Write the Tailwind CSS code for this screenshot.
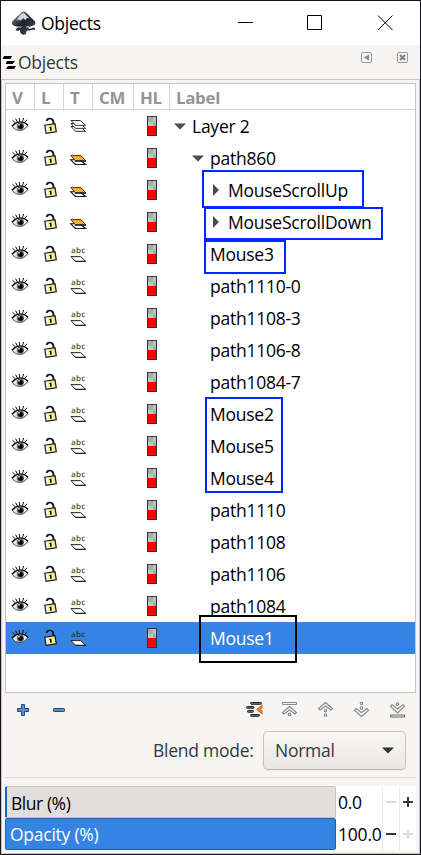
<!DOCTYPE html>
<html lang="en">
<head>
<meta charset="utf-8">
<title>Objects</title>
<script src="https://cdn.jsdelivr.net/npm/@tailwindcss/browser@4"></script>
</head>
<body class="bg-[#17151d]">
<svg class="absolute size-0">
  <defs>
    <linearGradient id="gold" x1="0" x2="1"><stop offset="0" stop-color="#ffc31a"/><stop offset="1" stop-color="#f3a52b"/></linearGradient>
    <linearGradient id="body" x1="0" x2="1"><stop offset="0" stop-color="#fffef0"/><stop offset="1" stop-color="#f8df62"/></linearGradient>
    <linearGradient id="ink" x1="0" x2="1" y2="1"><stop offset="0" stop-color="#8f98a8"/><stop offset=".45" stop-color="#20222a"/><stop offset="1" stop-color="#454d5d"/></linearGradient>
    <symbol id="eye" viewBox="0 0 29 32">
      <path d="M6.3 16.6Q10 11.5 15 11.8Q20 12 21.8 16Q18 20.8 13.5 20.6Q9 20.3 6.3 16.6Z" fill="#e8e8e8" stroke="#333" stroke-width=".9"/>
      <path d="M6 16Q10 11.8 14.5 12Q19 12 22 15.2" fill="none" stroke="#000" stroke-width="1.2"/>
      <circle cx="14.4" cy="16.2" r="3.6" fill="#666"/><circle cx="14.6" cy="16.4" r="2.4" fill="#000"/><circle cx="13" cy="14.8" r=".9" fill="#ddd"/>
      <path d="M6.5 10.2L9.5 13M9.6 8.6L11.3 12M13.2 8L13.6 11.6M17.6 8L16.5 11.7M21 9.7L18.6 12.6" stroke="#111" stroke-width="1"/>
    </symbol>
    <symbol id="lock" viewBox="0 0 29 32">
      <path d="M11.6 11Q11.8 9 14.3 8.7Q17.9 8.5 18.3 11.6L18.6 14.2" fill="none" stroke="#111" stroke-width="1.8"/>
      <path d="M12.8 10.5Q14.5 9 16.7 9.9" fill="none" stroke="#bbb" stroke-width=".5"/>
      <path d="M9.8 15.2L20 13.6L21.3 21.8L11.1 23.4Z" fill="url(#body)" stroke="#111" stroke-width="1.15"/>
      <path d="M14 17L16.4 16.6L16.3 18L16.9 20.4L15 20.7L15 18.500Z" fill="#000"/>
    </symbol>
    <symbol id="layer" viewBox="0 0 29 32">
      <g fill="#fff" stroke="#222" stroke-width="1"><path d="M7 16.5H16.5L21.5 21.3H11.7Z"/><path d="M7 13.6H16.5L21.5 18.4H11.7Z"/><path d="M7 10.6H16.5L21.5 15.4H11.7Z"/></g>
      <path d="M11.5 15.5H21.5M11.5 18.5H21.5M11.5 21.5H21.5" stroke="#555"/>
    </symbol>
    <symbol id="group" viewBox="0 0 29 32">
      <path d="M6.7 17.8H16L21.6 22.5H11.4Z" fill="#fff" stroke="#111" stroke-width="1.1"/>
      <path d="M6.8 13.6H17L21.6 18.7H11.4Z" fill="url(#gold)" stroke="#29220f" stroke-width=".9"/>
      <path d="M11 19.2H22" stroke="#111" stroke-width="1.1"/>
    </symbol>
    <symbol id="shape" viewBox="0 0 29 32">
      <text x="7" y="15" font-family="DejaVu Sans" font-size="7.8" textLength="14.2" fill="#222">abc</text>
      <path d="M7 18.6H16.8L21.5 23.3H11.5Z" fill="#fff" stroke="#222" stroke-width="1"/><path d="M11 23.4H22" stroke="#222"/>
    </symbol>
    <symbol id="hl" viewBox="0 0 36 32">
      <rect x="13" y="6" width="10" height="20" fill="#333"/><path d="M14 7h8v9h-8z" fill="#aaa"/><path d="M19 7h3v5h-3zM14 12h5v4h-5z" fill="#c3c3c3"/><path d="M14 16h8v9h-8z" fill="#f00"/>
    </symbol>
  </defs>
</svg>
<div class="relative w-[421px] h-[855px] overflow-hidden bg-[#17151d] pl-px pt-px pr-px font-['Open_Sans',sans-serif] text-[17.5px] tracking-[-0.25px] text-black">
  <header class="h-[44px] bg-white flex items-center">
    <svg class="ml-[10px] mt-[-1px]" width="26" height="26" viewBox="0 0 26 26">
      <path d="M12.5 1.5Q14 1.5 16 3.6L23.6 11Q25.5 13.5 23 15.3L17 17.5L18.8 19.5L15.5 21L15 23.8L12.8 25L9.5 23.2L8.8 20L4.8 19.5L7 17.3L2 15.2Q-.2 13.2 1.6 11L9.6 3.4Q11 1.5 12.5 1.5Z" fill="url(#ink)"/>
      <path d="M12.5 2.4L18.6 8.5L16 7.8L14.5 10L12.3 8.3L9.5 10.5L7 9.5L5 11L9.6 4.6Z" fill="#d5dae1"/>
      <path d="M5.5 17h5M15 17.2l3-.7" stroke="#dfe3e8" stroke-width=".9"/><path d="M5 19.5l3 .7M17.5 20l3.5-1M21 18.6l3 .2" stroke="#252a35" stroke-width="1.7"/>
    </svg>
    <h1 class="ml-[4px]">Objects</h1>
    <svg class="ml-auto mr-[25px]" width="160" height="20" viewBox="0 0 160 20" fill="none" stroke="#000"><path d="M3 9.5H18"/><path d="M72.5 2.5H86.5V16.5H72.5Z"/><path d="M143 2.5L157.5 17M157.5 2.5L143 17"/></svg>
  </header>
  <main class="h-[809px] w-[419px] bg-[#f6f5f3] flex flex-col">
    <div class="h-[34px] shrink-0 flex items-start text-[#333a3d]">
      <svg class="mt-[10px]" width="16" height="15" viewBox="0 0 16 15" fill="#000"><path d="M3 1H11L9.500 4H1.500ZM6 6H14L11.500 9H4.500ZM7 11H15L13 14H5Z"/></svg>
      <h2 class="mt-[4px] ml-[1px] leading-[26px]">Objects</h2>
      <svg class="ml-auto mt-[6px] mr-[12px]" width="48" height="13" viewBox="0 0 48 13" fill="none" stroke="#969899"><rect x="1.500" y="1.500" width="10" height="10" rx="1.500"/><path d="M9 3.500V9.500L3.700 6.500Z" fill="#85888a" stroke="none"/><rect x="37.500" y="1.500" width="10" height="10" rx="1.500"/><path d="M40 4L45 9M45 4L40 9" stroke="#7d8082" stroke-width="2"/></svg>
    </div>
    <div class="h-[775px] border border-[#c8c5c0] flex flex-col">
      <section class="ml-[3px] mt-[3px] w-[411px] h-[610px] shrink-0 border border-[#c8c5c0] bg-white">
        <div class="grid grid-cols-[29px_29px_29px_41px_36px_1fr] h-[26px] border-b border-[#d8d5d1] font-bold text-[16.800px] leading-[27px] text-[#929595]">
          <div class="border-r border-[#d8d5d1] pl-[6px]">V</div><div class="border-r border-[#d8d5d1] pl-[6px]">L</div><div class="border-r border-[#d8d5d1] pl-[6px]">T</div><div class="border-r border-[#d8d5d1] pl-[6px]">CM</div><div class="border-r border-[#d8d5d1] pl-[6px]">HL</div><div class="pl-[6px]">Label</div>
        </div>
        <div id="rows"></div>
      </section>
      <div class="h-[34px] shrink-0 flex items-center">
        <svg class="ml-[14px]" width="50" height="14" viewBox="0 0 50 14" fill="#5b8fc8" stroke="#204a87"><path d="M5.500 1.500H8.500V5.500H12.500V8.500H8.500V12.500H5.500V8.500H1.500V5.500H5.500Z" stroke-linejoin="round"/><rect x="37.500" y="5.500" width="11" height="3" rx=".7"/></svg>
        <svg class="ml-auto mr-[12px]" width="162" height="18" viewBox="0 0 162 18" fill="none" stroke="#858889" stroke-width="1.100">
          <g fill="#777" stroke="#222" stroke-width="1"><rect x="5.500" y="1.500" width="11" height="1.800" rx=".8"/><rect x="1.500" y="5.500" width="7.500" height="1.800" rx=".8"/><rect x="2.500" y="9.500" width="6" height="1.800" rx=".8"/><rect x="5.500" y="13.500" width="9" height="1.800" rx=".8"/></g>
          <path d="M17 4.500L12 8.500L17 12.500V10L15 8.500L17 6.800Z" fill="#f3a65e" stroke="#d2660a"/>
          <g><rect x="37.500" y="1.500" width="14" height="2" rx=".8"/><path d="M44.500 5.500L51.500 11.500L50 13L44.500 9L39 13L37.500 11.500Z"/><circle cx="44.500" cy="13.500" r="1.300"/></g>
          <g><path d="M80.500 1.500L87.500 7.500L86 9L80.500 5L75 9L73.500 7.500Z"/><circle cx="80.500" cy="9.700" r="1.200"/><circle cx="80.500" cy="14" r="1.300"/></g>
          <g><path d="M116.500 15.500L123.500 9.500L122 7.500L116.500 11.500L111 7.500L109.500 9.500Z"/><circle cx="116.500" cy="2.500" r="1.200"/><circle cx="116.500" cy="7" r="1.300"/></g>
          <g><path d="M152.500 12L159.500 5.500L158 3.500L152.500 8L147 3.500L145.500 5.500Z"/><circle cx="152.500" cy="3" r="1.300"/><rect x="145.500" y="14" width="14" height="2" rx=".8" stroke="#666"/></g>
        </svg>
      </div>
      <div class="h-[50px] shrink-0 flex items-center pl-[151px] pb-[4px] text-[#333a3d]">
        <span class="w-[110px] whitespace-nowrap mt-[1px]">Blend mode:</span>
        <button class="w-[143px] h-[39px] rounded-[5px] border border-[#c8c5c0] border-b-[#b8b4af] bg-linear-to-b from-[#f7f6f5] to-[#eae8e6] shadow-xs flex items-center justify-between pl-[11px] pr-[11px]"><span>Normal</span><svg width="12" height="7" viewBox="0 0 12 7"><path d="M0 .5H12L6 6.500Z" fill="#303537"/></svg></button>
      </div>
      <div class="ml-[3px] w-[411px] border-t border-[#dcdad7] shrink-0"></div>
      <div class="ml-[3px] mt-[8px] w-[411px] shrink-0">
        <div class="flex h-[32px]">
          <div class="w-[331px] rounded-[2px] border border-[#c8c5c0] border-l-2 border-l-[#1b62b8] bg-[#e1dedb] pl-[4px] leading-[32px] tracking-[-0.45px]">Blur (%)</div>
          <div class="w-[46px] bg-white pl-[2px] leading-[33px]">0.0</div>
          <svg class="bg-white" width="34" height="32" viewBox="0 0 34 32"><path d="M.5 0V32M17.500 0V32" stroke="#ececea"/><path d="M4 16H14" stroke="#dcdcdc" stroke-width="2"/><path d="M21 16H31M26 11V21" stroke="#33393c" stroke-width="2"/></svg>
        </div>
        <div class="flex h-[32px]">
          <div class="w-[331px] rounded-[2px] border border-[#1b62b8] bg-[#3584e4] text-white pl-[4px] leading-[31px]">Opacity (%)</div>
          <div class="w-[46px] bg-white pl-[2px] leading-[33px] tracking-[-0.2px]">100.0</div>
          <svg class="bg-white" width="34" height="32" viewBox="0 0 34 32"><path d="M.5 0V32M17.500 0V32" stroke="#ececea"/><path d="M4 16H14" stroke="#33393c" stroke-width="2"/><path d="M21 16H31M26 11V21" stroke="#dcdcdc" stroke-width="2"/></svg>
        </div>
      </div>
    </div>
  </main>
  <div class="absolute left-[202px] top-[170px] w-[162px] h-[38px] border-2 border-[#0026ff]"></div>
  <div class="absolute left-[204px] top-[207px] w-[179px] h-[33px] border-2 border-[#0026ff]"></div>
  <div class="absolute left-[204px] top-[240px] w-[82px] h-[34px] border-2 border-[#0026ff]"></div>
  <div class="absolute left-[205px] top-[397px] w-[78px] h-[96px] border-2 border-[#0026ff]"></div>
  <div class="absolute left-[199px] top-[615px] w-[98px] h-[48px] border-2 border-black"></div>
</div>
<script>
const items = [
  ['Layer 2','layer',0,'open'],['path860','group',1,'open'],['MouseScrollUp','group',2,'closed'],['MouseScrollDown','group',2,'closed'],
  ...['Mouse3','path1110-0','path1108-3','path1106-8','path1084-7','Mouse2','Mouse5','Mouse4','path1110','path1108','path1106','path1084','Mouse1'].map(n => [n,'shape',1,''])
];
const pads = ['pl-[4px]','pl-[22px]','pl-[40px]'];
const arrows = {open:'<path d="M0 5.500H12L6 11.500Z" fill="#4c4c4c"/>', closed:'<path d="M3 2V14L9 8Z" fill="#4c4c4c"/>', '':''};
document.getElementById('rows').innerHTML = items.map(([name,type,depth,arrow]) => `
  <div class="grid grid-cols-[29px_29px_29px_41px_36px_1fr] h-[32px] ${name === 'Mouse1' ? 'bg-[#3584e4] text-white' : ''}">
    <svg width="29" height="32"><use href="#eye"/></svg><svg width="29" height="32"><use href="#lock"/></svg><svg width="29" height="32"><use href="#${type}"/></svg><span></span><svg width="36" height="32"><use href="#hl"/></svg>
    <div class="flex items-center ${pads[depth]}"><svg width="14" height="16" viewBox="0 0 14 16">${arrows[arrow]}</svg><span class="ml-[4px] whitespace-nowrap">${name}</span></div>
  </div>`).join('');
</script>
</body>
</html>
